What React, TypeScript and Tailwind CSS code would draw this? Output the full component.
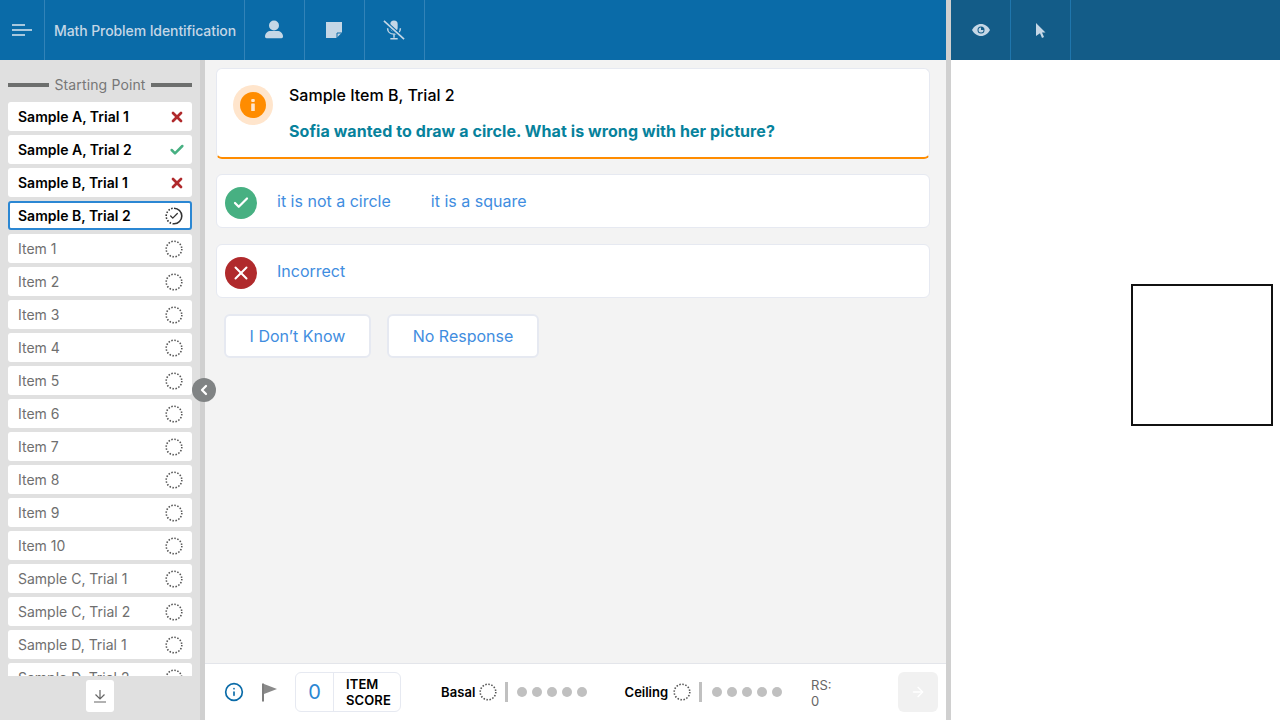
import React from "react";
import { Check, X, ChevronLeft, ArrowRight, Info } from "lucide-react";

const sans = "font-['Inter','Noto_Sans',sans-serif]";

const doneItems = [
  { label: "Sample A, Trial 1", ok: false },
  { label: "Sample A, Trial 2", ok: true },
  { label: "Sample B, Trial 1", ok: false },
];

const pendingItems = [
  "Item 1",
  "Item 2",
  "Item 3",
  "Item 4",
  "Item 5",
  "Item 6",
  "Item 7",
  "Item 8",
  "Item 9",
  "Item 10",
  "Sample C, Trial 1",
  "Sample C, Trial 2",
  "Sample D, Trial 1",
  "Sample D, Trial 2",
];

const DashedCircle = ({ size = 18, color = "#555" }: { size?: number; color?: string }) => (
  <svg width={size} height={size} viewBox="0 0 18 18" fill="none">
    <circle cx="9" cy="9" r="7.8" stroke={color} strokeWidth="1.6" strokeDasharray="1.5 1.57" />
  </svg>
);

const TopCell = ({ children }: { children: React.ReactNode }) => (
  <div className="flex h-full w-[60px] shrink-0 items-center justify-center border-r border-[#3283b8] pr-[1px]">
    {children}
  </div>
);

const Dots = () => (
  <div className="flex items-center gap-[5px]">
    {[0, 1, 2, 3, 4].map((i) => (
      <span key={i} className="h-[10px] w-[10px] rounded-full bg-[#c0c0c0]" />
    ))}
  </div>
);

export default function App() {
  return (
    <div className={`flex h-[720px] w-[1280px] flex-col overflow-hidden bg-white ${sans}`}>
      {/* top bar */}
      <div className="flex h-[60px] shrink-0">
        <div className="flex w-[946px] bg-[#0a6ba8] text-[#c5d7e6]">
          <div className="flex h-full w-[45px] shrink-0 items-center justify-center border-r border-[#3283b8]">
            <svg width="22" height="12" viewBox="0 0 22 12" fill="none" stroke="#dbe7f0" strokeWidth="1.6">
              <path d="M1 1h13M1 6h20M1 11h13" />
            </svg>
          </div>
          <div className="flex h-full w-[200px] shrink-0 items-center border-r border-[#3283b8] pl-[9px] text-[14px] font-medium tracking-[-0.09px] whitespace-nowrap">
            Math Problem Identification
          </div>
          <TopCell>
            <svg width="20" height="20" viewBox="0 0 20 20" fill="#c5d7e6">
              <circle cx="10" cy="5.500" r="5" />
              <path d="M1 16.500c0-3.500 3-5.500 5.500-5.500h7c2.500 0 5.500 2 5.500 5.500 0 1-.7 1.700-1.500 1.700H2.500C1.700 18.200 1 17.500 1 16.500z" />
            </svg>
          </TopCell>
          <TopCell>
            <svg width="18" height="18" viewBox="0 0 18 18">
              <path d="M1 1h16v10.500L11.500 17H1z" fill="#c5d7e6" />
              <path d="M12 17v-5h5" fill="none" stroke="#0a6ba8" strokeWidth="1" />
            </svg>
          </TopCell>
          <TopCell>
            <svg width="24" height="22" viewBox="0 0 26 24" fill="none">
              <rect x="9" y="1.500" width="8" height="12" rx="4" fill="#c5d7e6" />
              <path d="M6 10c0 4 3 6.500 7 6.500s7-2.500 7-6.500M13 16.500v4M9 21.500h8" stroke="#c5d7e6" strokeWidth="1.600" />
              <path d="M2.500 2.500l21 19" stroke="#0a6ba8" strokeWidth="4" />
              <path d="M2 2l22 20" stroke="#c5d7e6" strokeWidth="1.800" />
            </svg>
          </TopCell>
        </div>
        <div className="w-[5px] shrink-0 bg-[#d0d0d0]" />
        <div className="flex flex-1 bg-[#135c88]">
          <div className="flex h-full w-[60px] items-center justify-center border-r border-[#1f76ad]">
            <svg width="18" height="12" viewBox="0 0 18 12">
              <path d="M0 6c2-3.500 5-6 9-6s7 2.500 9 6c-2 3.500-5 6-9 6s-7-2.500-9-6z" fill="#c5d7e6" />
              <circle cx="9" cy="6" r="3.500" fill="#135c88" />
              <path d="M9 3.500a2.500 2.500 0 1 0 2.500 2.500H9z" fill="#c5d7e6" />
            </svg>
          </div>
          <div className="flex h-full w-[60px] items-center justify-center border-r border-[#1f76ad]">
            <svg width="10" height="15" viewBox="0 0 10 15" fill="#c5d7e6">
              <path d="M0 0l9.500 9.500H6l2 4.500-2 1-2-4.700L0 13z" />
            </svg>
          </div>
        </div>
      </div>

      <div className="flex min-h-0 flex-1">
        {/* left column */}
        <aside className="relative flex w-[205px] shrink-0 flex-col border-r-[5px] border-[#d0d0d0] bg-[#e0e0e0]">
          <div className="flex h-[42px] shrink-0 items-end gap-[5px] px-2 pb-[9px]">
            <span className="mb-[6px] h-[4px] flex-1 bg-[#6d6f6e]" />
            <span className="text-[14px] leading-[17px] tracking-[0.13px] text-[#777]">Starting Point</span>
            <span className="mb-[6px] h-[4px] flex-1 bg-[#6d6f6e]" />
          </div>
          <div className="flex h-[574px] flex-col gap-1 overflow-hidden px-2">
            {doneItems.map((it) => (
              <div
                key={it.label}
                className="flex h-[29px] shrink-0 items-center justify-between rounded-[3px] bg-white pr-[7px] pl-[10px] text-[14px] font-semibold text-black"
              >
                {it.label}
                {it.ok ? (
                  <Check size={16} strokeWidth={3.8} className="text-[#47b082]" />
                ) : (
                  <X size={16} strokeWidth={4} className="text-[#b02a2c]" />
                )}
              </div>
            ))}
            <div className="flex h-[29px] shrink-0 items-center justify-between rounded-[3px] border-2 border-[#2b87d3] bg-white pr-[7px] pl-[8px] text-[14px] font-semibold text-black">
              Sample B, Trial 2
              <span className="relative flex h-[18px] w-[18px] items-center justify-center">
                <svg width="18" height="18" viewBox="0 0 18 18" fill="none" className="absolute inset-0">
                  <path d="M9 1.200a7.800 7.800 0 0 1 0 15.600" stroke="#333" strokeWidth="1.600" />
                  <path d="M9 16.800a7.800 7.800 0 0 1 0-15.600" stroke="#333" strokeWidth="1.600" strokeDasharray="1.500 1.570" />
                </svg>
                <Check size={10} strokeWidth={3} className="text-[#333]" />
              </span>
            </div>
            {pendingItems.map((label) => (
              <div
                key={label}
                className="flex h-[29px] shrink-0 items-center justify-between rounded-[3px] bg-white pr-[9px] pl-[10px] text-[14px] text-[#6f6f6f]"
              >
                {label}
                <DashedCircle />
              </div>
            ))}
          </div>
          <div className="flex flex-1 justify-center pt-1">
            <div className="flex h-[32px] w-[28px] items-center justify-center rounded-[3px] bg-white">
              <svg width="14" height="14" viewBox="0 0 14 14" fill="none" stroke="#666" strokeWidth="1.200">
                <path d="M7 1v8.500M2.500 5.500L7 10l4.500-4.500M1 13h12" />
              </svg>
            </div>
          </div>
          <button className="absolute top-[318px] right-[-16px] z-10 flex h-[24px] w-[24px] items-center justify-center rounded-full bg-[#808384]">
            <ChevronLeft size={16} strokeWidth={3.4} className="text-white" />
          </button>
        </aside>

        {/* main */}
        <main className="flex w-[741px] shrink-0 flex-col bg-[#f3f3f3]">
          <div className="flex-1 pt-2 pr-4 pl-[11px]">
            <div className="flex h-[91px] rounded-[6px] border border-b-2 border-[#e6e9f1] border-b-[#ff8c00] bg-white pt-4 pl-4">
              <div className="flex h-[40px] w-[40px] items-center justify-center rounded-full bg-[#ffe5cc]">
                <span className="flex h-[26px] w-[26px] items-center justify-center rounded-full bg-[#ff8c00]">
                  <svg width="4" height="12" viewBox="0 0 4 12" fill="#ffe5cc">
                    <rect x="0.200" y="0" width="3.600" height="3" rx="1" />
                    <rect x="0.200" y="4.500" width="3.600" height="7.500" rx="0.500" />
                  </svg>
                </span>
              </div>
              <div className="ml-4">
                <div className="text-[16px] leading-[20px] font-medium text-black">Sample Item B, Trial 2</div>
                <div className="mt-[16px] text-[16px] leading-[20px] font-bold tracking-[0.08px] text-[#07829c]">
                  Sofia wanted to draw a circle. What is wrong with her picture?
                </div>
              </div>
            </div>

            <div className="mt-[15px] flex h-[54px] items-center rounded-[6px] border border-[#e6e9f1] bg-white pl-2">
              <span className="mt-[4px] flex h-[32px] w-[32px] items-center justify-center rounded-full bg-[#47b082]">
                <Check size={18} strokeWidth={3} className="text-white" />
              </span>
              <span className="ml-5 text-[16px] text-[#3f8de0]">it is not a circle</span>
              <span className="ml-10 text-[16px] text-[#3f8de0]">it is a square</span>
            </div>

            <div className="mt-4 flex h-[54px] items-center rounded-[6px] border border-[#e6e9f1] bg-white pl-2">
              <span className="mt-[4px] flex h-[32px] w-[32px] items-center justify-center rounded-full bg-[#b02a2c]">
                <X size={22} strokeWidth={2.2} className="text-white" />
              </span>
              <span className="ml-5 text-[16px] text-[#3f8de0]">Incorrect</span>
            </div>

            <div className="mt-4 flex gap-4 pl-2">
              <button className="flex h-[44px] w-[147px] items-center justify-center rounded-[6px] border-2 border-[#e6e9f1] bg-white text-[16px] text-[#3f8de0]">
                I Don’t Know
              </button>
              <button className="flex h-[44px] w-[152px] items-center justify-center rounded-[6px] border-2 border-[#e6e9f1] bg-white text-[16px] text-[#3f8de0]">
                No Response
              </button>
            </div>
          </div>

          {/* footer */}
          <div className="flex h-[57px] shrink-0 items-center border-t border-[#e3e5ea] bg-white pl-5">
            <Info size={20} strokeWidth={2} className="-mt-[1px] -ml-[1px] text-[#0a6ba8]" />
            <svg width="16" height="20" viewBox="0 0 16 20" className="ml-[18px]">
              <path d="M1 1.500v18" stroke="#707070" strokeWidth="1.800" />
              <path d="M2 2l13 5-13 5z" fill="#8a8a8a" />
            </svg>
            <div className="ml-[17px] flex h-[40px] w-[106px] items-center rounded-[6px] border border-[#e6e9f1]">
              <span className="flex h-full w-[38px] items-center justify-center border-r border-[#e6e9f1] text-[20px] text-[#2b87d3]">
                0
              </span>
              <span className="pl-3 text-[13px] leading-[16px] font-semibold tracking-[0.1px] text-black">
                ITEM
                <br />
                SCORE
              </span>
            </div>
            <span className="mt-[1px] ml-10 text-[13px] font-semibold tracking-[0.1px] text-black">Basal</span>
            <span className="ml-[3px]">
              <DashedCircle />
            </span>
            <span className="mr-[9px] ml-[8px] h-[20px] w-[3px] bg-[#c0c0c0]" />
            <Dots />
            <span className="mt-[1px] ml-[38px] text-[13px] font-semibold text-black">Ceiling</span>
            <span className="ml-[5px]">
              <DashedCircle />
            </span>
            <span className="mr-[10px] ml-[8px] h-[20px] w-[3px] bg-[#c0c0c0]" />
            <Dots />
            <div className="mt-[2px] ml-[29px] w-[87px] text-[13px] leading-[16px] text-[#666]">
              RS:
              <br />
              0
            </div>
            <div className="flex h-[40px] w-[40px] items-center justify-center rounded-[6px] bg-[#f1f1f1]">
              <ArrowRight size={16} className="text-white" />
            </div>
          </div>
        </main>

        <div className="w-[5px] shrink-0 bg-[#d0d0d0]" />

        {/* drawing canvas */}
        <div className="flex flex-1 justify-end bg-white pt-[224px] pr-[7px]">
          <div className="h-[142px] w-[142px] border-2 border-[#111]" />
        </div>
      </div>
    </div>
  );
}
